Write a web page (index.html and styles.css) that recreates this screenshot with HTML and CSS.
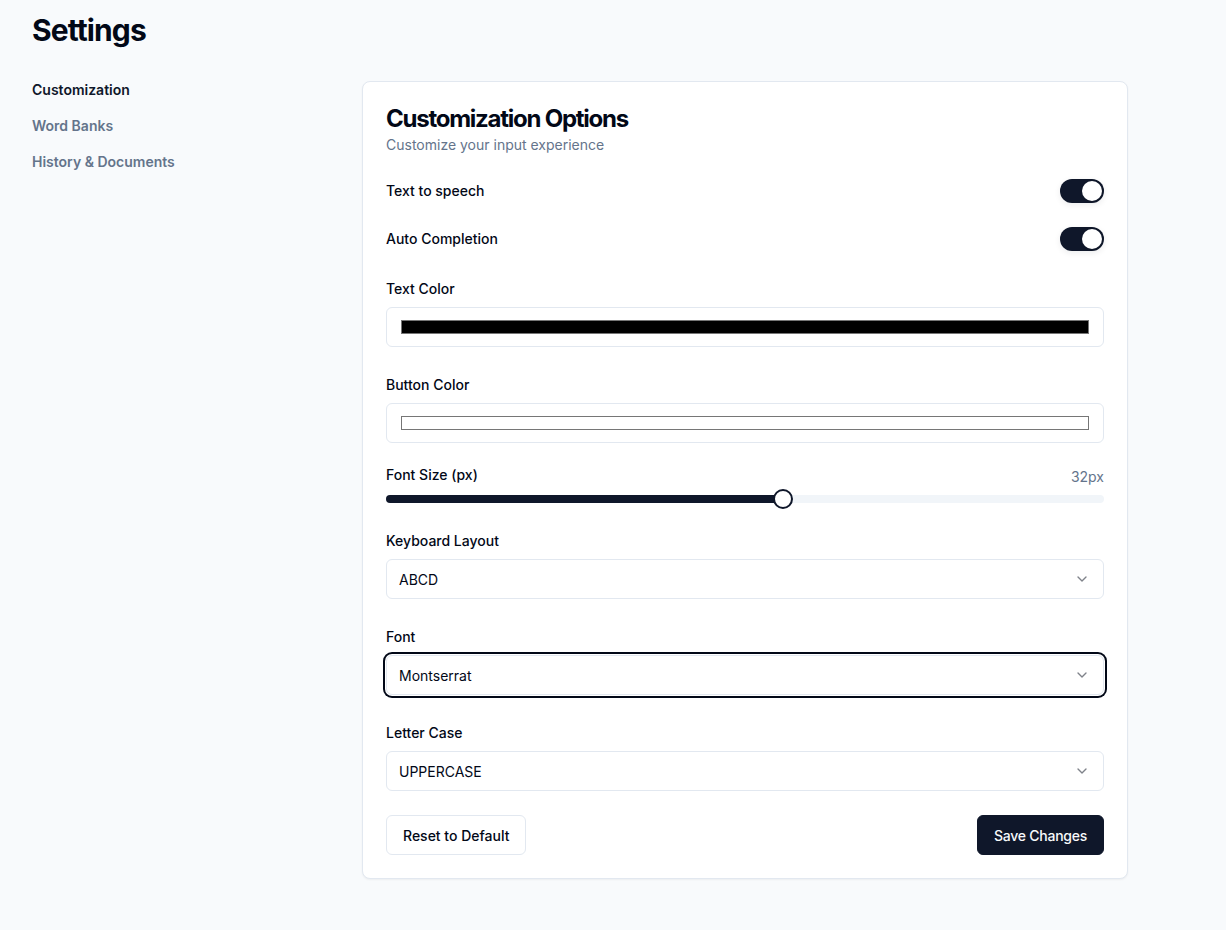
FILE: index.html
```html
<!DOCTYPE html>
<html lang="en">
<head>
<meta charset="utf-8">
<title>Settings</title>
<link rel="stylesheet" href="styles.css">
</head>
<body>
<div class="page">
  <h1 class="title">Settings</h1>
  <div class="layout">
    <nav class="sidebar">
      <a class="nav-item active">Customization</a>
      <a class="nav-item">Word Banks</a>
      <a class="nav-item">History &amp; Documents</a>
    </nav>
    <section class="card">
      <div class="card-header">
        <h2 class="card-title">Customization Options</h2>
        <p class="card-desc">Customize your input experience</p>
      </div>
      <div class="toggle-row first">
        <span class="label">Text to speech</span>
        <span class="switch"><span class="knob"></span></span>
      </div>
      <div class="toggle-row">
        <span class="label">Auto Completion</span>
        <span class="switch"><span class="knob"></span></span>
      </div>
      <div class="field gap-lg">
        <label class="label">Text Color</label>
        <div class="control color-control"><span class="swatch swatch-black"></span></div>
      </div>
      <div class="field gap-lg">
        <label class="label">Button Color</label>
        <div class="control color-control"><span class="swatch swatch-white"></span></div>
      </div>
      <div class="field gap-md">
        <div class="slider-head">
          <label class="label">Font Size (px)</label>
          <span class="slider-value">32px</span>
        </div>
        <div class="slider">
          <div class="track"><div class="range" style="width: 55.3%"></div></div>
          <span class="thumb" style="left: 55.3%"></span>
        </div>
      </div>
      <div class="field gap-md">
        <label class="label">Keyboard Layout</label>
        <div class="control select"><span>ABCD</span><svg class="chev" width="16" height="16" viewBox="0 0 24 24" fill="none" stroke="currentColor" stroke-width="2" stroke-linecap="round" stroke-linejoin="round"><path d="m6 9 6 6 6-6"/></svg></div>
      </div>
      <div class="field gap-lg">
        <label class="label">Font</label>
        <div class="control select focused"><span>Montserrat</span><svg class="chev" width="16" height="16" viewBox="0 0 24 24" fill="none" stroke="currentColor" stroke-width="2" stroke-linecap="round" stroke-linejoin="round"><path d="m6 9 6 6 6-6"/></svg></div>
      </div>
      <div class="field gap-lg">
        <label class="label">Letter Case</label>
        <div class="control select"><span>UPPERCASE</span><svg class="chev" width="16" height="16" viewBox="0 0 24 24" fill="none" stroke="currentColor" stroke-width="2" stroke-linecap="round" stroke-linejoin="round"><path d="m6 9 6 6 6-6"/></svg></div>
      </div>
      <div class="actions">
        <button class="btn btn-outline">Reset to Default</button>
        <button class="btn btn-primary">Save Changes</button>
      </div>
    </section>
  </div>
</div>
</body>
</html>
```

FILE: styles.css
```css
* { box-sizing: border-box; }
html, body { margin: 0; padding: 0; }
body {
  background: #f8fafc;
  font-family: Inter, "Noto Sans", sans-serif;
  color: #020817;
  -webkit-font-smoothing: antialiased;
}
.page {
  padding: 12px 32px 40px 32px;
}
.title {
  margin: 0;
  font-size: 30px;
  line-height: 36px;
  font-weight: 700;
  letter-spacing: -0.9px;
  color: #020817;
}
.layout {
  display: grid;
  grid-template-columns: 330px 766px;
  align-items: start;
  margin-top: 33px;
}
.sidebar {
  display: flex;
  flex-direction: column;
  gap: 16px;
  margin-top: -1px;
}
.nav-item {
  font-size: 14px;
  line-height: 20px;
  font-weight: 600;
  color: #64748b;
  text-decoration: none;
}
.nav-item.active { color: #0f172a; }
.card {
  background: #fff;
  border: 1px solid #e2e8f0;
  border-radius: 8px;
  box-shadow: 0 1px 2px rgba(0,0,0,0.05);
  padding: 25px 23px 23px 23px;
}
.card-title {
  margin: 0;
  font-size: 24px;
  line-height: 24px;
  font-weight: 700;
  letter-spacing: -1.25px;
  color: #020817;
}
.card-desc {
  margin: 4px 0 0;
  font-size: 14px;
  line-height: 20px;
  color: #64748b;
}
.label {
  display: block;
  font-size: 14px;
  line-height: 20px;
  font-weight: 500;
  color: #020817;
}
.toggle-row {
  display: flex;
  align-items: center;
  justify-content: space-between;
  height: 24px;
  margin-top: 24px;
}
.switch {
  width: 44px;
  height: 24px;
  border-radius: 999px;
  background: #0f172a;
  display: flex;
  align-items: center;
  justify-content: flex-end;
  padding: 2px;
  box-shadow: 0 2px 6px rgba(15,23,42,0.08);
}
.knob {
  width: 20px;
  height: 20px;
  border-radius: 50%;
  background: #fff;
  box-shadow: 0 1px 3px rgba(0,0,0,0.1);
}
.field { display: flex; flex-direction: column; }
.field.gap-lg { margin-top: 28px; }
.field.gap-md { margin-top: 22px; }
.field > .label { margin-bottom: 8px; }
.control {
  height: 40px;
  border: 1px solid #e2e8f0;
  border-radius: 6px;
  background: #fff;
}
.color-control {
  display: flex;
  align-items: center;
  padding: 0 14px;
}
.swatch {
  flex: 1;
  height: 14px;
  border: 1px solid #767676;
}
.swatch-black { background: #000; }
.swatch-white { background: #fff; }
.slider-head {
  display: flex;
  justify-content: space-between;
  align-items: flex-start;
  height: 20px;
}
.slider-value {
  font-size: 14px;
  line-height: 20px;
  color: #64748b;
  margin-top: 2px;
}
.slider {
  position: relative;
  height: 20px;
  margin-top: 4px;
  display: flex;
  align-items: center;
}
.track {
  width: 100%;
  height: 8px;
  border-radius: 999px;
  background: #f1f5f9;
  overflow: hidden;
}
.range {
  height: 100%;
  background: #0f172a;
}
.thumb {
  position: absolute;
  top: 0;
  width: 20px;
  height: 20px;
  margin-left: -10px;
  border-radius: 50%;
  background: #fff;
  border: 2px solid #0f172a;
}
.select {
  display: flex;
  align-items: center;
  justify-content: space-between;
  padding: 0 13px 0 12px;
  font-size: 14px;
  color: #020817;
}
.chev { color: #020817; opacity: 0.5; }
.select.focused {
  box-shadow: 0 0 0 1px #fff, 0 0 0 3px #020817;
}
.actions {
  display: flex;
  justify-content: space-between;
  margin-top: 24px;
}
.btn {
  height: 40px;
  border-radius: 6px;
  padding: 0 16px;
  font-family: inherit;
  font-size: 14px;
  font-weight: 500;
  cursor: pointer;
}
.btn-outline {
  background: #fff;
  border: 1px solid #e2e8f0;
  color: #020817;
}
.btn-primary {
  background: #0f172a;
  border: 1px solid #0f172a;
  color: #f8fafc;
  letter-spacing: -0.25px;
}
```
